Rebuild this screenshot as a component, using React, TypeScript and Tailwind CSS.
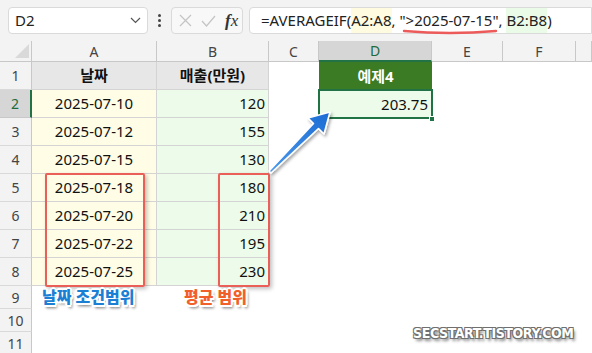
import type { ReactNode } from 'react'

const font = "font-['Noto_Sans','Noto_Sans_CJK_KR',sans-serif]"

const cols = [
  { key: 'A', w: 'w-[125px]' },
  { key: 'B', w: 'w-[112px]' },
  { key: 'C', w: 'w-[50px]' },
  { key: 'D', w: 'w-[113px]' },
  { key: 'E', w: 'w-[71px]' },
  { key: 'F', w: 'w-[73px]' },
  { key: 'G', w: 'w-[16px]' },
]

const rows = [
  { n: 2, a: '2025-07-10', b: '120' },
  { n: 3, a: '2025-07-12', b: '155' },
  { n: 4, a: '2025-07-15', b: '130' },
  { n: 5, a: '2025-07-18', b: '180' },
  { n: 6, a: '2025-07-20', b: '210' },
  { n: 7, a: '2025-07-22', b: '195' },
  { n: 8, a: '2025-07-25', b: '230' },
]

// cells inside the bordered table (A1:B8) get grid lines, the rest stay plain white
function Cell({ w, grid, className = '', children }: { w: string; grid?: boolean; className?: string; children?: ReactNode }) {
  return (
    <div
      className={`${w} shrink-0 h-full flex items-center text-[15px] text-[#111] ${
        grid ? 'border-r border-b border-[#d4d4d4]' : ''
      } ${className}`}
    >
      {children}
    </div>
  )
}

function RowHead({ n, active }: { n: number; active?: boolean }) {
  return (
    <div
      className={`w-[32px] shrink-0 h-full flex items-center justify-center text-[14px] border-b ${
        active
          ? 'bg-[#d6d6d6] text-[#1e6b3c] border-r-2 border-r-[#217346] border-b-[#c8c8c8]'
          : 'bg-[#f3f3f3] text-[#444] border-r border-r-[#c8c8c8] border-b-[#d9d9d9]'
      }`}
    >
      {n}
    </div>
  )
}

function Arrow() {
  return (
    <svg className="absolute left-[262px] top-[104px]" width="80" height="76" viewBox="0 0 80 76">
      <defs>
        <linearGradient id="ag" x1="0" y1="1" x2="1" y2="0">
          <stop offset="0" stopColor="#4a98ea" />
          <stop offset="1" stopColor="#1c6cd4" />
        </linearGradient>
        <filter id="as" x="-20%" y="-20%" width="150%" height="150%">
          <feDropShadow dx="1.5" dy="2" stdDeviation="1.5" floodColor="#000" floodOpacity="0.35" />
        </filter>
      </defs>
      <path
        d="M7 67 L51.5 19.5 L46 14 L68 8 L62 30 L56.5 24.5 L9 69 Z"
        fill="url(#ag)"
        stroke="#fff"
        strokeWidth="1.6"
        strokeLinejoin="round"
        filter="url(#as)"
      />
    </svg>
  )
}

const outline =
  '[text-shadow:-1.5px_-1.5px_0_#fff,1.5px_-1.5px_0_#fff,-1.5px_1.5px_0_#fff,1.5px_1.5px_0_#fff,0_-2px_0_#fff,0_2px_0_#fff,-2px_0_0_#fff,2px_0_0_#fff,2px_3px_3px_rgba(0,0,0,0.6)]'

export default function App() {
  return (
    <div className={`relative w-[592px] h-[353px] overflow-hidden bg-white ${font}`}>
      {/* formula bar */}
      <div className="h-[41px] bg-[#f3f3f3] flex items-center">
        <div className="ml-[8px] w-[140px] h-[27px] bg-white border border-[#dadada] rounded-[4px] flex items-center justify-between pl-[6px] pr-[6px]">
          <span className="text-[15px] text-[#222]">D2</span>
          <svg width="11" height="7" viewBox="0 0 11 7">
            <path d="M1 1 L5.5 5.5 L10 1" fill="none" stroke="#555" strokeWidth="1.2" />
          </svg>
        </div>
        <div className="w-[23px] flex flex-col items-center gap-[2px]">
          <span className="w-[3px] h-[3px] bg-[#444] rounded-full" />
          <span className="w-[3px] h-[3px] bg-[#444] rounded-full" />
          <span className="w-[3px] h-[3px] bg-[#444] rounded-full" />
        </div>
        <div className="w-[72px] h-[27px] bg-[#f8f8f8] border border-[#dadada] rounded-[4px] flex items-center pl-[7px] gap-[9px]">
          <svg width="13" height="13" viewBox="0 0 13 13">
            <path d="M1 1 L12 12 M12 1 L1 12" stroke="#c4c4c4" strokeWidth="1.2" />
          </svg>
          <svg width="15" height="12" viewBox="0 0 15 12">
            <path d="M1 6 L5.5 11 L14 1" fill="none" stroke="#c4c4c4" strokeWidth="1.2" />
          </svg>
          <span className="font-['Liberation_Serif',serif] italic text-[17px] text-[#333] leading-none">
            <span className="font-bold">f</span>x
          </span>
        </div>
        <div className="ml-[6px] flex-1 h-[27px] bg-white border border-[#dadada] rounded-l-[4px] flex items-center pl-[11px] text-[15px] text-[#222] whitespace-nowrap">
          <span>=AVERAGEIF(</span>
          <span className="bg-[#fffbe0] h-full flex items-center">A2:A8</span>
          <span className="whitespace-pre">, </span>
          <span className="relative">
            "&gt;2025-07-15"
            <svg className="absolute left-[3px] top-[19px]" width="96" height="8" viewBox="0 0 96 8">
              <path d="M2 3 Q48 7 94 3" fill="none" stroke="#ec5a5a" strokeWidth="2.4" strokeLinecap="round" />
            </svg>
          </span>
          <span className="whitespace-pre">, </span>
          <span className="bg-[#eafbe8] h-full flex items-center">B2:B8</span>
          <span>)</span>
        </div>
      </div>

      {/* column headers */}
      <div className="flex h-[21px]">
        <div className="w-[32px] shrink-0 h-full bg-[#f3f3f3] border-r border-b border-[#c8c8c8] flex items-end justify-end pr-[2px] pb-[3px]">
          <svg width="14" height="14" viewBox="0 0 14 14">
            <path d="M14 0 L14 14 L0 14 Z" fill="#d9d9d9" />
          </svg>
        </div>
        {cols.map((c) => (
          <div
            key={c.key}
            className={`${c.w} shrink-0 h-full flex items-center justify-center text-[14px] ${
              c.key === 'D'
                ? 'bg-[#d6d6d6] text-[#1e6b3c] border-b-2 border-[#217346] border-r border-r-[#c8c8c8]'
                : 'bg-[#f3f3f3] text-[#444] border-r border-b border-[#c8c8c8]'
            }`}
          >
            {c.key !== 'G' ? c.key : ''}
          </div>
        ))}
      </div>

      {/* row 1 */}
      <div className="flex h-[28px]">
        <RowHead n={1} />
        <Cell w="w-[125px]" grid className="justify-center bg-[#e7e7e7] font-bold">날짜</Cell>
        <Cell w="w-[112px]" grid className="justify-center bg-[#e7e7e7] font-bold">매출(만원)</Cell>
        <Cell w="w-[50px]" />
        <Cell w="w-[113px]" className="justify-center bg-[#3b7b23] text-white font-bold">예제4</Cell>
        <Cell w="w-[71px]" />
        <Cell w="w-[73px]" />
        <Cell w="w-[16px]" />
      </div>

      {rows.map((r) => (
        <div key={r.n} className="flex h-[28px]">
          <RowHead n={r.n} active={r.n === 2} />
          <Cell w="w-[125px]" grid className="justify-center bg-[#fffde6]">{r.a}</Cell>
          <Cell w="w-[112px]" grid className="justify-end pr-[3px] bg-[#edfcea]">{r.b}</Cell>
          <Cell w="w-[50px]" />
          <Cell w="w-[113px]" className={r.n === 2 ? 'justify-end pr-[4px] bg-[#edfcea]' : ''}>
            {r.n === 2 ? '203.75' : ''}
          </Cell>
          <Cell w="w-[71px]" />
          <Cell w="w-[73px]" />
          <Cell w="w-[16px]" />
        </div>
      ))}

      {[9, 10, 11].map((n) => (
        <div key={n} className="flex h-[23px]">
          <RowHead n={n} />
        </div>
      ))}

      {/* selection on D2 */}
      <div className="absolute left-[318px] top-[89px] w-[115px] h-[30px] border-2 border-[#217346]" />
      <div className="absolute left-[429px] top-[116px] w-[6px] h-[6px] bg-[#217346] border border-white" />

      {/* red range boxes */}
      <div className="absolute left-[45px] top-[173px] w-[100px] h-[114px] border-2 border-[#ea5f57] rounded-[2px] shadow-[2px_2px_4px_rgba(0,0,0,0.25)]" />
      <div className="absolute left-[218px] top-[173px] w-[52px] h-[114px] border-2 border-[#ea5f57] rounded-[2px] shadow-[2px_2px_4px_rgba(0,0,0,0.25)]" />

      <Arrow />

      {/* labels */}
      <div className={`absolute left-[42px] top-[284px] text-[16px] font-black text-[#1b7fd4] leading-[26px] ${outline}`}>
        날짜 조건범위
      </div>
      <div className={`absolute left-[184px] top-[284px] text-[16px] font-black text-[#f2602a] leading-[26px] ${outline}`}>
        평균 범위
      </div>

      {/* watermark */}
      <div className="absolute left-[413px] top-[323px] text-[14px] font-bold text-white leading-[20px] tracking-[-0.4px] font-['DejaVu_Sans_Condensed','Liberation_Sans',sans-serif] [text-shadow:-1px_-1px_0_#6f6f6f,1px_-1px_0_#6f6f6f,-1px_1px_0_#6f6f6f,1px_1px_0_#6f6f6f,2px_3px_3px_rgba(0,0,0,0.5)]">
        SECSTART.TISTORY.COM
      </div>
    </div>
  )
}
